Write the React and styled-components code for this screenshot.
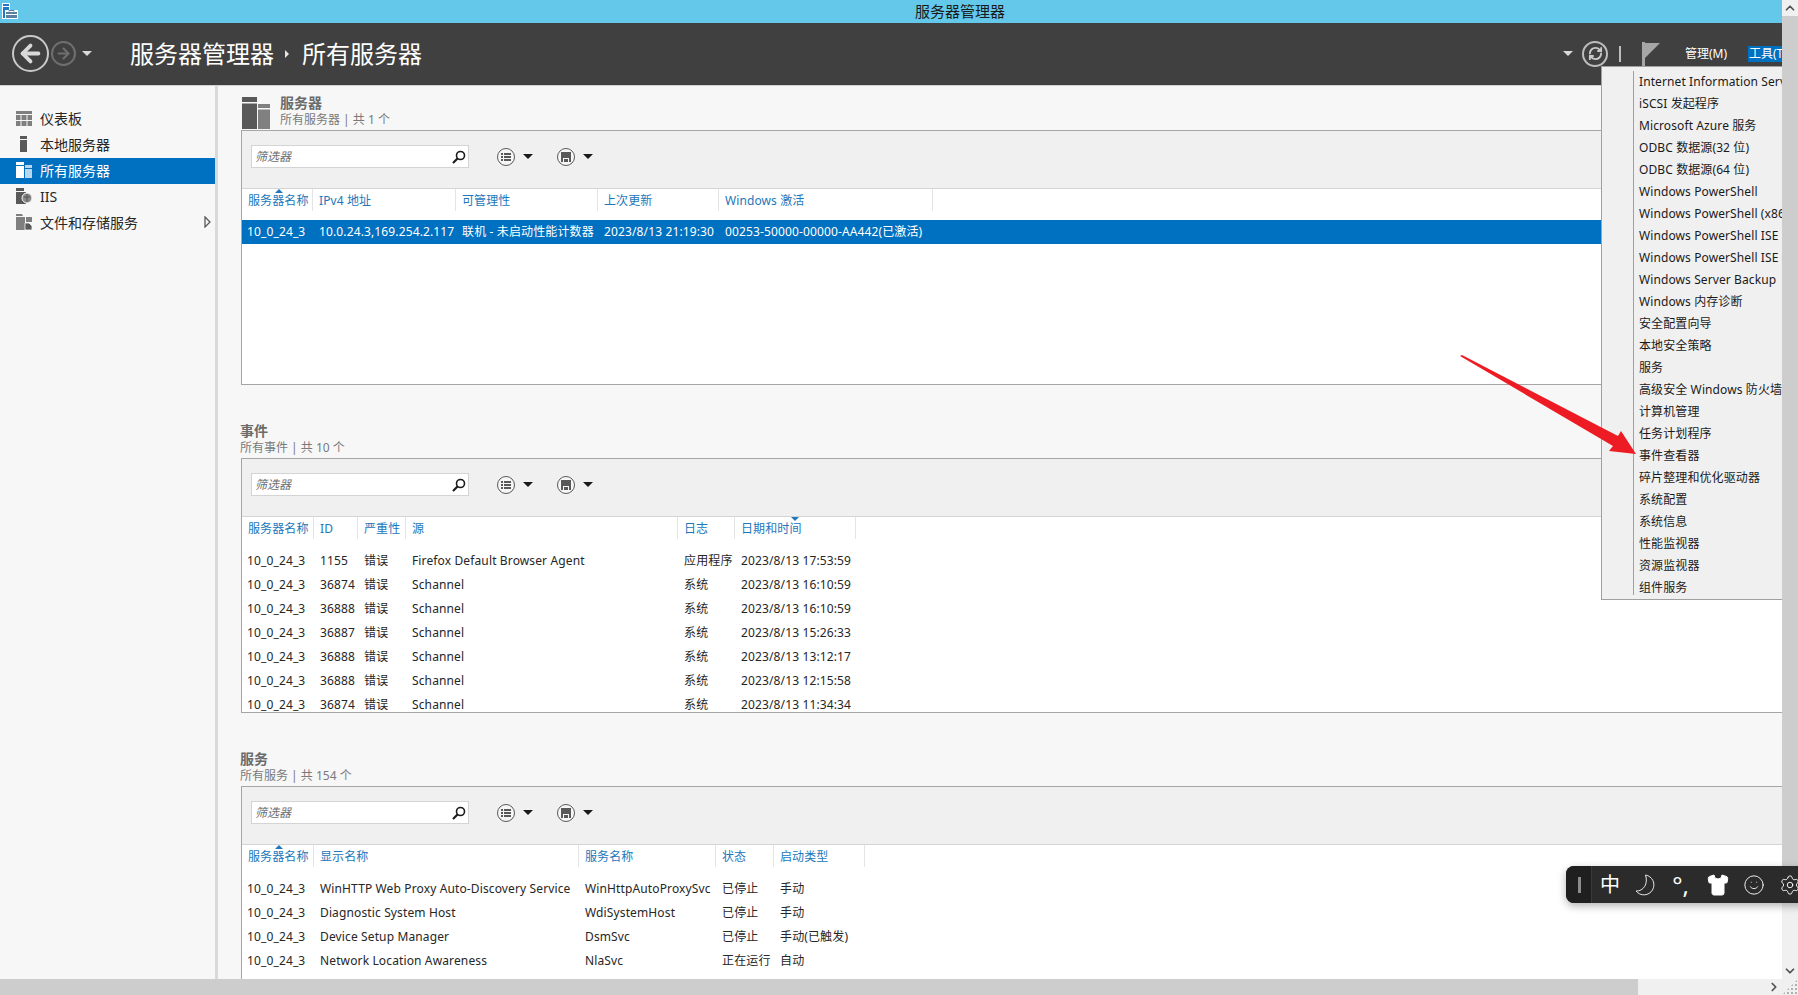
import React from "react";
import styled, { createGlobalStyle } from "styled-components";
import { ArrowLeft, ArrowRight, ChevronDown, ChevronRight, ChevronUp, RefreshCw, Settings, Shirt, Smile } from "lucide-react";

const menuItems = [
  "Internet Information Services (IIS)管理器",
  "iSCSI 发起程序",
  "Microsoft Azure 服务",
  "ODBC 数据源(32 位)",
  "ODBC 数据源(64 位)",
  "Windows PowerShell",
  "Windows PowerShell (x86)",
  "Windows PowerShell ISE",
  "Windows PowerShell ISE (x86)",
  "Windows Server Backup",
  "Windows 内存诊断",
  "安全配置向导",
  "本地安全策略",
  "服务",
  "高级安全 Windows 防火墙",
  "计算机管理",
  "任务计划程序",
  "事件查看器",
  "碎片整理和优化驱动器",
  "系统配置",
  "系统信息",
  "性能监视器",
  "资源监视器",
  "组件服务",
];

const serverCols = "71px 143px 142px 121px 214px 1fr";
const eventCols = "72px 44px 48px 272px 57px 121px 1fr";
const serviceCols = "72px 265px 137px 58px 91px 1fr";

const eventRows = [
  ["10_0_24_3", "1155", "错误", "Firefox Default Browser Agent", "应用程序", "2023/8/13 17:53:59"],
  ["10_0_24_3", "36874", "错误", "Schannel", "系统", "2023/8/13 16:10:59"],
  ["10_0_24_3", "36888", "错误", "Schannel", "系统", "2023/8/13 16:10:59"],
  ["10_0_24_3", "36887", "错误", "Schannel", "系统", "2023/8/13 15:26:33"],
  ["10_0_24_3", "36888", "错误", "Schannel", "系统", "2023/8/13 13:12:17"],
  ["10_0_24_3", "36888", "错误", "Schannel", "系统", "2023/8/13 12:15:58"],
  ["10_0_24_3", "36874", "错误", "Schannel", "系统", "2023/8/13 11:34:34"],
];

const serviceRows = [
  ["10_0_24_3", "WinHTTP Web Proxy Auto-Discovery Service", "WinHttpAutoProxySvc", "已停止", "手动"],
  ["10_0_24_3", "Diagnostic System Host", "WdiSystemHost", "已停止", "手动"],
  ["10_0_24_3", "Device Setup Manager", "DsmSvc", "已停止", "手动(已触发)"],
  ["10_0_24_3", "Network Location Awareness", "NlaSvc", "正在运行", "自动"],
];

const AppIcon = () => (
  <AppIconSvg width="18" height="19" viewBox="0 0 18 19">
    <rect x="2.5" y="3.5" width="7" height="3" fill="#1f78c8" stroke="#fff" />
    <rect x="2.5" y="6.5" width="7" height="12" fill="#1f78c8" stroke="#fff" />
    <rect x="5" y="10" width="13" height="9" fill="#fff" />
    <rect x="6" y="12" width="11" height="6" fill="#5b7f9e" />
    <path d="M6 14.5h11" stroke="#fff" />
    <path d="M9 11.5v-1h5v1" fill="none" stroke="#5b7f9e" />
  </AppIconSvg>
);

const DashboardIcon = () => (
  <svg width="16" height="15" viewBox="0 0 16 15" fill="#7f7f7f">
    <rect width="16" height="3" />
    <rect y="4" width="4.5" height="5" />
    <rect x="5.5" y="4" width="5" height="5" />
    <rect x="11.5" y="4" width="4.5" height="5" />
    <rect y="10" width="4.5" height="5" />
    <rect x="5.5" y="10" width="5" height="5" />
    <rect x="11.5" y="10" width="4.5" height="5" />
  </svg>
);

const LocalIcon = () => (
  <svg width="16" height="16" viewBox="0 0 16 16" fill="#595959">
    <rect x="4" width="7" height="3" />
    <rect x="4" y="4" width="7" height="12" />
  </svg>
);

const AllIcon = () => (
  <svg width="16" height="16" viewBox="0 0 16 16">
    <rect width="8" height="3" fill="#fff" />
    <rect y="4" width="8" height="12" fill="#fff" />
    <rect x="9" y="3" width="7" height="3" fill="#b6d7ee" />
    <rect x="9" y="7" width="7" height="9" fill="#b6d7ee" />
  </svg>
);

const IisIcon = () => (
  <svg width="16" height="16" viewBox="0 0 16 16">
    <rect width="8" height="3" fill="#595959" />
    <rect y="4" width="10" height="12" fill="#595959" />
    <circle cx="11" cy="10" r="5" fill="#8a8a8a" stroke="#f7f7f7" />
    <path d="M8 9h6M11 6v8" stroke="#555" />
  </svg>
);

const FilesIcon = () => (
  <svg width="16" height="16" viewBox="0 0 16 16">
    <path d="M0 0h6l1 2h-7z" fill="#7f7f7f" />
    <rect y="3" width="9" height="13" fill="#7f7f7f" />
    <rect x="10" y="3" width="6" height="5" fill="#7f7f7f" />
    <path d="M9 9h4l3 3v4H9z" fill="#595959" stroke="#f7f7f7" strokeWidth="0.8" />
  </svg>
);

const ServersIcon = () => (
  <svg width="28" height="32" viewBox="0 0 28 32">
    <rect width="15" height="5" fill="#595959" />
    <rect y="6.5" width="15" height="25.5" fill="#595959" />
    <rect x="16" y="7" width="12" height="4" fill="#808080" />
    <rect x="16" y="12.5" width="12" height="19.5" fill="#808080" />
  </svg>
);

const SearchGlyph = () => (
  <svg width="14" height="14" viewBox="0 0 14 14" fill="none" stroke="#1a1a1a" strokeWidth="1.6">
    <circle cx="8.5" cy="5.5" r="4" />
    <path d="M5.5 8.5L1 13" strokeWidth="2.2" />
  </svg>
);

const ListGlyph = () => (
  <svg width="10" height="10" viewBox="0 0 10 10" fill="#595959">
    <rect x="0" y="1" width="2" height="2" />
    <rect x="3" y="1" width="7" height="2" />
    <rect x="0" y="4" width="2" height="2" />
    <rect x="3" y="4" width="7" height="2" />
    <rect x="0" y="7" width="2" height="2" />
    <rect x="3" y="7" width="7" height="2" />
  </svg>
);

const SaveGlyph = () => (
  <svg width="10" height="10" viewBox="0 0 10 10" fill="#595959">
    <path d="M0 0h10v10H8V6H2v4H0z" />
    <rect x="3" y="7" width="4" height="3" />
  </svg>
);

const MoonGlyph = () => (
  <svg width="22" height="22" viewBox="0 0 22 22" fill="none" stroke="#e6e6e6" strokeWidth="1">
    <path d="M10.5 1A10 10 0 1 1 1 17C8.5 17.5 13.5 9.5 10.5 1Z" />
  </svg>
);

const Toolbar = () => (
  <ToolRow>
    <FilterBox>
      <FilterInput placeholder="筛选器" />
      <SearchGlyph />
    </FilterBox>
    <RoundTool $left={28}>
      <ToolCircle>
        <ListGlyph />
      </ToolCircle>
      <DarkCaret />
    </RoundTool>
    <RoundTool $left={24}>
      <ToolCircle>
        <SaveGlyph />
      </ToolCircle>
      <DarkCaret />
    </RoundTool>
  </ToolRow>
);

const Table = ({ cols, heads, sort, rows, selected }) => (
  <>
    <HeadRow $cols={cols} $tall={!selected}>
      {heads.map((head, i) => (
        <HeadCell key={head}>
          {sort && sort.col === i && <SortMark $down={sort.down} $left={sort.left} />}
          {head}
        </HeadCell>
      ))}
      <HeadFill />
    </HeadRow>
    {rows.map((row, i) => (
      <DataRow key={i} $cols={cols} $selected={selected}>
        {row.map((cell, j) => (
          <DataCell key={j}>{cell}</DataCell>
        ))}
      </DataRow>
    ))}
  </>
);

export default function App() {
  return (
    <Window>
      <GlobalStyle />
      <Upper>
        <Page>
          <TitleBar>
            <AppIcon />
            <TitleText>服务器管理器</TitleText>
          </TitleBar>
          <Header>
            <BackButton>
              <ArrowLeft size={27} strokeWidth={3.4} />
            </BackButton>
            <ForwardButton>
              <ArrowRight size={17} strokeWidth={3} />
            </ForwardButton>
            <LightCaret $left={6} />
            <Crumb $left={38}>服务器管理器</Crumb>
            <CrumbArrow />
            <Crumb $left={13}>所有服务器</Crumb>
            <HeaderRight>
              <LightCaret $left={0} />
              <RefreshButton>
                <RefreshCw size={15} strokeWidth={3} />
              </RefreshButton>
              <HeaderDivider />
              <FlagIcon width="18" height="24" viewBox="0 0 18 24">
                <rect width="3" height="24" fill="#a6a6a6" />
                <path d="M3 1h15L3 16z" fill="#a6a6a6" />
              </FlagIcon>
              <HeaderMenu>管理(M)</HeaderMenu>
              <HeaderMenu $active>工具(T)</HeaderMenu>
            </HeaderRight>
          </Header>
          <Body>
            <Sidebar>
              <NavItem>
                <NavIcon>
                  <DashboardIcon />
                </NavIcon>
                仪表板
              </NavItem>
              <NavItem>
                <NavIcon>
                  <LocalIcon />
                </NavIcon>
                本地服务器
              </NavItem>
              <NavItem $active>
                <NavIcon>
                  <AllIcon />
                </NavIcon>
                所有服务器
              </NavItem>
              <NavItem>
                <NavIcon>
                  <IisIcon />
                </NavIcon>
                IIS
              </NavItem>
              <NavItem>
                <NavIcon>
                  <FilesIcon />
                </NavIcon>
                文件和存储服务
                <NavArrow width="7" height="12" viewBox="0 0 7 12">
                  <path d="M1 1l5 5-5 5z" fill="none" stroke="#595959" strokeWidth="1.3" />
                </NavArrow>
              </NavItem>
            </Sidebar>
            <Main>
              <section>
                <SectionHead>
                  <HeadIcon>
                    <ServersIcon />
                  </HeadIcon>
                  <div>
                    <SectionTitle>服务器</SectionTitle>
                    <SectionSub>所有服务器 | 共 1 个</SectionSub>
                  </div>
                </SectionHead>
                <Panel>
                  <Toolbar />
                  <Table
                    cols={serverCols}
                    heads={["服务器名称", "IPv4 地址", "可管理性", "上次更新", "Windows 激活"]}
                    sort={{ col: 0, left: 33 }}
                    selected
                    rows={[
                      [
                        "10_0_24_3",
                        "10.0.24.3,169.254.2.117",
                        "联机 - 未启动性能计数器",
                        "2023/8/13 21:19:30",
                        "00253-50000-00000-AA442(已激活)",
                      ],
                    ]}
                  />
                </Panel>
              </section>
              <section>
                <SectionHead>
                  <div>
                    <SectionTitle>事件</SectionTitle>
                    <SectionSub>所有事件 | 共 10 个</SectionSub>
                  </div>
                </SectionHead>
                <Panel>
                  <Toolbar />
                  <Table
                    cols={eventCols}
                    heads={["服务器名称", "ID", "严重性", "源", "日志", "日期和时间"]}
                    sort={{ col: 5, left: 56, down: true }}
                    rows={eventRows}
                  />
                </Panel>
              </section>
              <section>
                <SectionHead>
                  <div>
                    <SectionTitle>服务</SectionTitle>
                    <SectionSub>所有服务 | 共 154 个</SectionSub>
                  </div>
                </SectionHead>
                <Panel>
                  <Toolbar />
                  <Table
                    cols={serviceCols}
                    heads={["服务器名称", "显示名称", "服务名称", "状态", "启动类型"]}
                    sort={{ col: 0, left: 33 }}
                    rows={serviceRows}
                  />
                </Panel>
              </section>
            </Main>
          </Body>
          <ToolsMenu>
            <MenuRule />
            {menuItems.map((item) => (
              <MenuItem key={item}>{item}</MenuItem>
            ))}
          </ToolsMenu>
          <RedArrow width="190" height="110" viewBox="0 0 190 110">
            <path d="M5 6L7 5L163 86L166 81L181 104L154 101L158 96Z" fill="#ed1c24" />
          </RedArrow>
        </Page>
        <VScroll>
          <ScrollEnd>
            <ChevronUp size={14} strokeWidth={3} />
          </ScrollEnd>
          <VThumb />
          <ScrollEnd>
            <ChevronDown size={14} strokeWidth={3} />
          </ScrollEnd>
        </VScroll>
      </Upper>
      <HScroll>
        <HThumb />
        <ScrollEnd $wide>
          <ChevronRight size={14} strokeWidth={3} />
        </ScrollEnd>
        <Grip />
      </HScroll>
      <ImeBar>
        <ImeHandle>
          <span />
        </ImeHandle>
        <ImeItem $size={20}>中</ImeItem>
        <ImeItem>
          <MoonGlyph />
        </ImeItem>
        <ImeItem $size={24} $shift={3}>°,</ImeItem>
        <ImeItem>
          <Shirt size={24} fill="#fff" strokeWidth={1} />
        </ImeItem>
        <ImeItem>
          <Smile size={22} strokeWidth={1} />
        </ImeItem>
        <ImeItem>
          <Settings size={22} strokeWidth={1} />
        </ImeItem>
      </ImeBar>
    </Window>
  );
}

const GlobalStyle = createGlobalStyle`
  html, body {
    margin: 0;
    height: 100%;
    overflow: hidden;
  }
  body {
    font-family: "Noto Sans", "Noto Sans CJK SC", sans-serif;
    font-size: 12px;
    color: #262626;
  }
  * {
    box-sizing: border-box;
  }
`;

const Window = styled.div`
  position: relative;
  display: flex;
  flex-direction: column;
  width: 1798px;
  height: 995px;
  overflow: hidden;
  background: #f7f7f7;
`;

const Upper = styled.div`
  display: flex;
  flex: 1;
  min-height: 0;
`;

const Page = styled.div`
  position: relative;
  display: flex;
  flex-direction: column;
  flex: 1;
  min-width: 0;
  overflow: hidden;
`;

const TitleBar = styled.div`
  display: flex;
  align-items: center;
  flex: none;
  height: 23px;
  background: #63c8ea;
`;

const AppIconSvg = styled.svg`
  flex: none;
  margin-bottom: 4px;
`;

const TitleText = styled.div`
  margin-left: 897px;
  font-size: 15px;
  line-height: 23px;
  color: #1a1a1a;
`;

const Header = styled.header`
  display: flex;
  align-items: center;
  flex: none;
  height: 63px;
  padding: 0 0 1px 12px;
  background: #404040;
  border-bottom: 1px solid #d0d0d0;
`;

const BackButton = styled.div`
  display: flex;
  align-items: center;
  justify-content: center;
  width: 37px;
  height: 37px;
  border: 2px solid #c9c9c9;
  border-radius: 50%;
  color: #d9d9d9;
`;

const ForwardButton = styled.div`
  display: flex;
  align-items: center;
  justify-content: center;
  width: 25px;
  height: 25px;
  margin-left: 2px;
  border: 2px solid #6f6f6f;
  border-radius: 50%;
  color: #6f6f6f;
`;

const LightCaret = styled.span`
  flex: none;
  width: 0;
  height: 0;
  margin-left: ${(p) => p.$left}px;
  border-left: 5px solid transparent;
  border-right: 5px solid transparent;
  border-top: 5px solid #d9d9d9;
`;

const Crumb = styled.div`
  margin-left: ${(p) => p.$left}px;
  font-size: 24px;
  line-height: 32px;
  color: #fff;
  white-space: nowrap;
`;

const CrumbArrow = styled.span`
  width: 0;
  height: 0;
  margin-left: 11px;
  border-top: 4px solid transparent;
  border-bottom: 4px solid transparent;
  border-left: 4px solid #e6e6e6;
`;

const HeaderRight = styled.div`
  display: flex;
  align-items: center;
  flex: none;
  margin-left: auto;
  margin-right: -16px;
`;

const RefreshButton = styled.div`
  display: flex;
  align-items: center;
  justify-content: center;
  width: 26px;
  height: 26px;
  margin-left: 9px;
  border: 2px solid #bdbdbd;
  border-radius: 50%;
  color: #c9c9c9;
`;

const HeaderDivider = styled.span`
  width: 2px;
  height: 16px;
  margin-left: 11px;
  background: #bdbdbd;
`;

const FlagIcon = styled.svg`
  margin-left: 21px;
`;

const HeaderMenu = styled.div`
  width: ${(p) => (p.$active ? 50 : 44)}px;
  margin-left: ${(p) => (p.$active ? 19 : 25)}px;
  padding-left: ${(p) => (p.$active ? 1 : 0)}px;
  font-size: 12px;
  line-height: 16px;
  color: #fff;
  white-space: nowrap;
  background: ${(p) => (p.$active ? "#0070c0" : "transparent")};
`;

const Body = styled.div`
  display: flex;
  flex: 1;
  min-height: 0;
`;

const Sidebar = styled.nav`
  flex: none;
  width: 218px;
  padding-top: 20px;
  background: #f7f7f7;
  border-right: 3px solid #d9d9d9;
`;

const NavItem = styled.div`
  position: relative;
  display: flex;
  align-items: center;
  height: 26px;
  padding-bottom: 2px;
  font-size: 14px;
  color: ${(p) => (p.$active ? "#fff" : "#262626")};
  background: ${(p) => (p.$active ? "#0070c0" : "transparent")};
`;

const NavIcon = styled.span`
  display: flex;
  width: 40px;
  padding-left: 16px;
`;

const NavArrow = styled.svg`
  position: absolute;
  top: 6px;
  right: 4px;
`;

const Main = styled.main`
  display: flex;
  flex-direction: column;
  flex: 1;
  gap: 37px;
  min-width: 0;
  padding: 8px 0 0 23px;
`;

const SectionHead = styled.div`
  display: flex;
  height: 36px;
  margin-left: -1px;
`;

const HeadIcon = styled.div`
  width: 40px;
  padding: 3px 0 0 2px;
`;

const SectionTitle = styled.div`
  font-size: 14px;
  font-weight: 700;
  line-height: 18px;
  color: #6b6b6b;
`;

const SectionSub = styled.div`
  font-size: 12px;
  line-height: 16px;
  color: #7a7a7a;
`;

const Panel = styled.div`
  height: 255px;
  margin-right: -2px;
  overflow: hidden;
  background: #fff;
  border: 1px solid #a6a6a6;
`;

const ToolRow = styled.div`
  display: flex;
  align-items: center;
  height: 58px;
  padding: 0 0 6px 9px;
  background: #f0f0f0;
  border-bottom: 1px solid #d4d4d4;
`;

const FilterBox = styled.div`
  display: flex;
  align-items: center;
  width: 218px;
  height: 23px;
  padding-right: 2px;
  background: #fff;
  border: 1px solid #d4d4d4;
`;

const FilterInput = styled.input`
  flex: 1;
  min-width: 0;
  padding: 0 3px;
  font-family: inherit;
  font-size: 12px;
  font-style: italic;
  border: none;
  outline: none;
  background: transparent;

  &::placeholder {
    color: #6f6f6f;
    opacity: 1;
  }
`;

const RoundTool = styled.div`
  display: flex;
  align-items: center;
  gap: 8px;
  margin-left: ${(p) => p.$left}px;
`;

const ToolCircle = styled.span`
  display: flex;
  align-items: center;
  justify-content: center;
  width: 18px;
  height: 18px;
  border: 1px solid #595959;
  border-radius: 50%;
  background: #f7f7f7;
`;

const DarkCaret = styled.span`
  width: 0;
  height: 0;
  border-left: 5px solid transparent;
  border-right: 5px solid transparent;
  border-top: 5px solid #1a1a1a;
`;

const HeadRow = styled.div`
  display: grid;
  grid-template-columns: ${(p) => p.$cols};
  height: ${(p) => (p.$tall ? 32 : 31)}px;
`;

const HeadCell = styled.div`
  position: relative;
  height: 22px;
  padding: 4px 0 0 6px;
  letter-spacing: 0.1px;
  line-height: 16px;
  color: #2277bb;
  white-space: nowrap;
  border-right: 1px solid #e4e4e4;
`;

const HeadFill = styled.div``;

const SortMark = styled.span`
  position: absolute;
  top: 0;
  left: ${(p) => p.$left}px;
  width: 0;
  height: 0;
  border-left: 4px solid transparent;
  border-right: 4px solid transparent;
  ${(p) => (p.$down ? "border-top" : "border-bottom")}: 4px solid #2277bb;
`;

const DataRow = styled.div`
  display: grid;
  grid-template-columns: ${(p) => p.$cols};
  align-items: center;
  height: 24px;
  color: ${(p) => (p.$selected ? "#fff" : "#262626")};
  background: ${(p) => (p.$selected ? "#0070c0" : "transparent")};
`;

const DataCell = styled.div`
  padding-left: 6px;
  letter-spacing: 0.13px;
  line-height: 16px;
  white-space: nowrap;

  &:first-child {
    padding-left: 5px;
  }
`;

const ToolsMenu = styled.div`
  position: absolute;
  top: 66px;
  right: 0;
  width: 181px;
  height: 534px;
  padding: 4px 0 0 37px;
  overflow: hidden;
  background: #f0f0f0;
  border: 1px solid #a0a0a0;
  border-right: none;
`;

const MenuRule = styled.span`
  position: absolute;
  top: 4px;
  bottom: 4px;
  left: 31px;
  width: 1px;
  background: #a0a0a0;
`;

const MenuItem = styled.div`
  height: 22px;
  font-size: 12px;
  letter-spacing: 0.1px;
  line-height: 22px;
  color: #1a1a1a;
  white-space: nowrap;
`;

const RedArrow = styled.svg`
  position: absolute;
  top: 350px;
  left: 1455px;
`;

const VScroll = styled.div`
  display: flex;
  flex-direction: column;
  flex: none;
  width: 16px;
  background: #f0f0f0;
`;

const ScrollEnd = styled.div`
  display: flex;
  align-items: center;
  justify-content: center;
  flex: none;
  width: ${(p) => (p.$wide ? "16px" : "auto")};
  height: 16px;
  color: #505050;
`;

const VThumb = styled.div`
  height: 850px;
  margin-bottom: auto;
  background: #cdcdcd;
`;

const HScroll = styled.div`
  display: flex;
  align-items: center;
  flex: none;
  height: 16px;
  background: #f0f0f0;
`;

const HThumb = styled.div`
  width: 1638px;
  height: 100%;
  margin-right: auto;
  background: #cdcdcd;
`;

const Grip = styled.div`
  width: 16px;
  height: 16px;
  background: radial-gradient(circle, #b0b0b0 1px, transparent 1.2px) 0 0 / 4px 4px;
  clip-path: polygon(100% 0, 100% 100%, 0 100%);
`;

const ImeBar = styled.div`
  position: absolute;
  top: 866px;
  left: 1566px;
  display: flex;
  align-items: center;
  width: 240px;
  height: 37px;
  overflow: hidden;
  color: #fff;
  background: #2b2b2b;
  border-radius: 8px 0 0 8px;
  box-shadow: 0 3px 8px rgba(0, 0, 0, 0.3);
`;

const ImeHandle = styled.div`
  display: flex;
  align-items: center;
  justify-content: center;
  flex: none;
  width: 26px;
  height: 100%;
  padding-left: 2px;
  background: #1f1f1f;
  border-right: 1px solid #3a3a3a;

  span {
    width: 3px;
    height: 16px;
    background: #8c8c8c;
  }
`;

const ImeItem = styled.div`
  display: flex;
  align-items: center;
  justify-content: center;
  flex: none;
  width: 36px;
  padding-right: ${(p) => p.$shift || 0}px;
  font-size: ${(p) => p.$size || 16}px;
  line-height: 24px;
`;
